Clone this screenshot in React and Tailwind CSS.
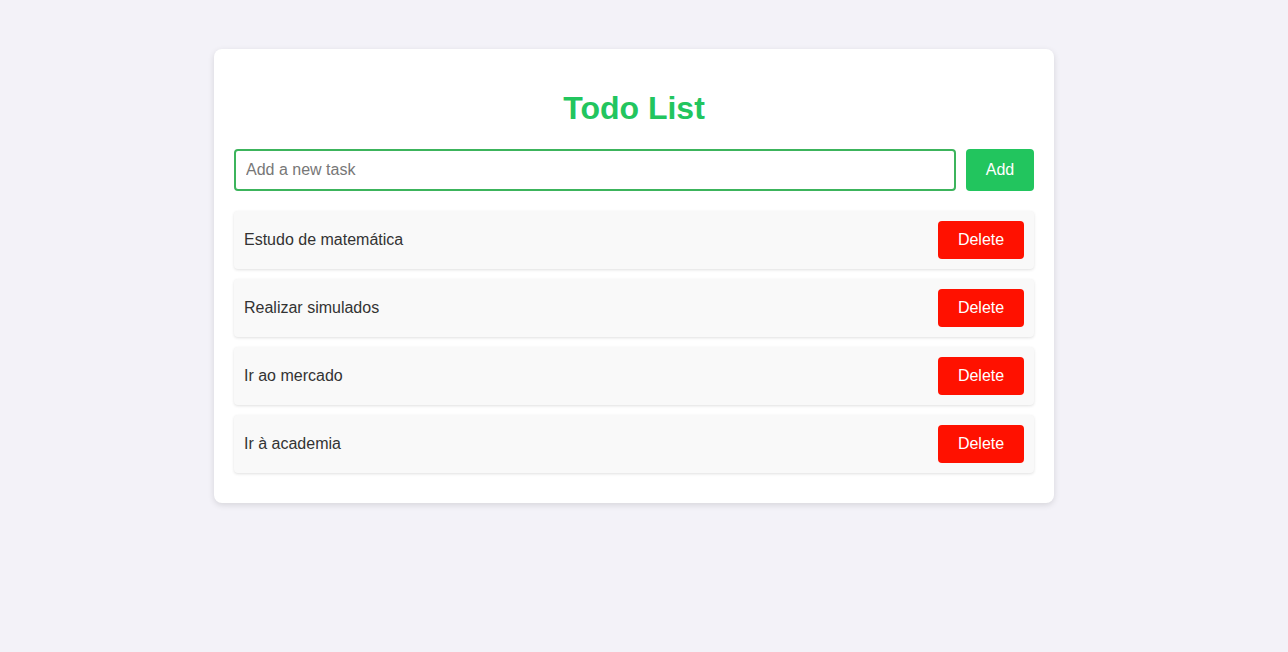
import { useState } from 'react'

const tarefasIniciais = [
  'Estudo de matemática',
  'Realizar simulados',
  'Ir ao mercado',
  'Ir à academia',
]

export default function App() {
  const [tarefas, setTarefas] = useState(tarefasIniciais)
  const [nova, setNova] = useState('')

  const adicionar = () => {
    if (!nova.trim()) return
    setTarefas(prev => [...prev, nova.trim()])
    setNova('')
  }

  const remover = (i) => {
    setTarefas(prev => prev.filter((_, idx) => idx !== i))
  }

  return (
    <div className="min-h-screen bg-[#f3f2f8] pt-[49px] pr-5 font-['Liberation_Sans',Arial,sans-serif] text-[#333]">
      <div className="mx-auto w-[840px] rounded-lg bg-white p-5 shadow-[0_2px_6px_rgba(0,0,0,0.12)]">
        <h1 className="mt-[21px] mb-[22px] text-center text-[32px] leading-[37px] font-bold text-[#22c55e]">Todo List</h1>

        <div className="flex gap-[10px]">
          <input
            value={nova}
            onChange={e => setNova(e.target.value)}
            placeholder="Add a new task"
            className="h-[42px] flex-1 rounded-[4px] border-2 border-[#3cb45c] px-[10px] text-base text-[#333] outline-none placeholder:text-[#777]"
          />
          <button
            onClick={adicionar}
            className="h-[42px] w-[68px] rounded-[4px] bg-[#22c55e] text-base text-white"
          >
            Add
          </button>
        </div>

        <ul className="mt-5">
          {tarefas.map((t, i) => (
            <li
              key={i}
              className="mb-[10px] flex h-[58px] items-center justify-between rounded-[4px] bg-[#f9f9f9] px-[10px] shadow-[0_1px_3px_rgba(0,0,0,0.12)]"
            >
              <span className="text-base">{t}</span>
              <button
                onClick={() => remover(i)}
                className="h-[38px] w-[86px] rounded-[4px] bg-[#ff1100] text-base text-white"
              >
                Delete
              </button>
            </li>
          ))}
        </ul>
      </div>
    </div>
  )
}
